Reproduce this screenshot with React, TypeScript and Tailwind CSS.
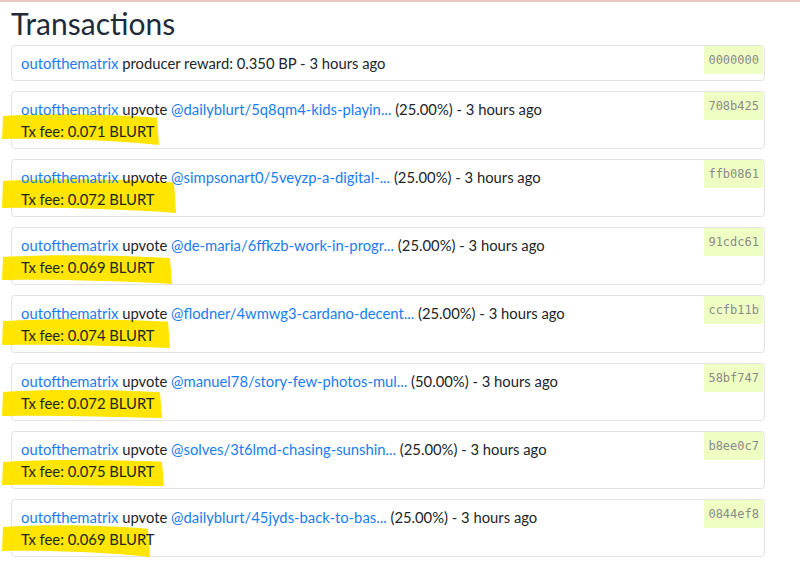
type Tx = {
  author?: string;
  permlink?: string;
  weight?: string;
  fee?: string;
  hash: string;
  // marker stroke drawn over the fee line: [width, top, height, tilt]
  mark?: [number, number, number, number];
};

const txs: Tx[] = [
  { hash: "0000000" },
  { author: "dailyblurt", permlink: "5q8qm4-kids-playin...", weight: "25.00%", fee: "0.071", hash: "708b425", mark: [158, 21, 33, 7] },
  { author: "simpsonart0", permlink: "5veyzp-a-digital-...", weight: "25.00%", fee: "0.072", hash: "ffb0861", mark: [175, 18, 36, 6] },
  { author: "de-maria", permlink: "6ffkzb-work-in-progr...", weight: "25.00%", fee: "0.069", hash: "91cdc61", mark: [171, 26, 31, 5] },
  { author: "flodner", permlink: "4wmwg3-cardano-decent...", weight: "25.00%", fee: "0.074", hash: "ccfb11b", mark: [169, 22, 31, 4] },
  { author: "manuel78", permlink: "story-few-photos-mul...", weight: "50.00%", fee: "0.072", hash: "58bf747", mark: [161, 25, 30, 3] },
  { author: "solves", permlink: "3t6lmd-chasing-sunshin...", weight: "25.00%", fee: "0.075", hash: "b8ee0c7", mark: [163, 27, 28, 2] },
  { author: "dailyblurt", permlink: "45jyds-back-to-bas...", weight: "25.00%", fee: "0.069", hash: "0844ef8", mark: [149, 24, 34, 7] },
];

function Marker({ mark }: { mark: [number, number, number, number] }) {
  const [w, top, h, tilt] = mark;
  // rough highlighter stroke, slightly sagging towards the right end
  const d = `M2 3 C ${w * 0.3} 0, ${w * 0.7} 1, ${w - 2} ${2 + tilt * 0.4}
    L ${w} ${h - 1} C ${w * 0.7} ${h - tilt + 1}, ${w * 0.3} ${h - tilt - 1}, 1 ${h - tilt} Z`;
  return (
    <svg
      className="pointer-events-none absolute left-[-11px]"
      style={{ top }}
      width={w + 2}
      height={h}
      viewBox={`0 0 ${w + 2} ${h}`}
    >
      <path d={d} fill="#ffe500" />
    </svg>
  );
}

export default function App() {
  return (
    <div
      className="min-h-[562px] w-[800px] overflow-hidden border-t-2 border-[#ecc9c0] bg-white pl-[11px] pr-[35px] text-[#212529]"
      style={{ fontFamily: "Lato, 'Open Sans', sans-serif" }}
    >
      <h1 className="pt-[1px] text-[30px] leading-[40px] text-[#1f2b38]">Transactions</h1>
      <div className="mt-[2px] flex flex-col gap-[10px]">
        {txs.map((tx) => (
          <div
            key={tx.hash}
            className="relative rounded-[4px] border border-[#e3e3e3] px-[9px] py-[6px] text-[14.8px] leading-[22px]"
          >
            {tx.mark && <Marker mark={tx.mark} />}
            <div className="relative">
              <a className="text-[#1a7cf0]">outofthematrix</a>{" "}
              {tx.author ? (
                <>
                  upvote <a className="text-[#1a7cf0]">@{tx.author}/{tx.permlink}</a> ({tx.weight}) - 3 hours ago
                </>
              ) : (
                <>producer reward: 0.350 BP - 3 hours ago</>
              )}
            </div>
            {tx.fee && <div className="relative">Tx fee: {tx.fee} BLURT</div>}
            <span
              className="absolute right-[1px] top-0 bg-[#efffc4] px-[4px] py-[6px] text-[12px] leading-[16px] text-[#8a8a8a]"
              style={{ fontFamily: "'DejaVu Sans Mono', monospace" }}
            >
              {tx.hash}
            </span>
          </div>
        ))}
      </div>
    </div>
  );
}
